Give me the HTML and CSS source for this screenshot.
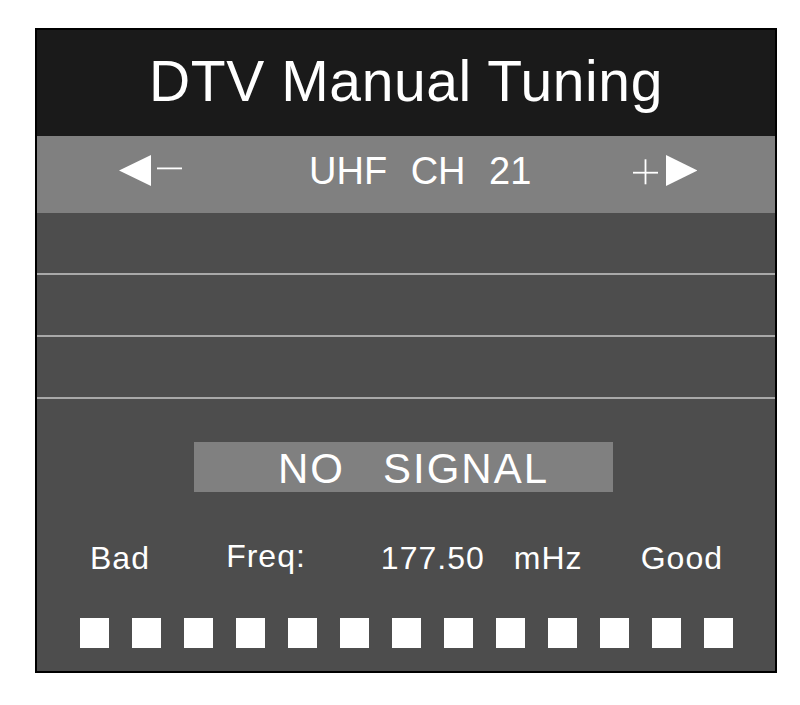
FILE: index.html
```html
<!DOCTYPE html>
<html lang="en">
<head>
  <meta charset="UTF-8">
  <meta name="viewport" content="width=device-width, initial-scale=1.0">
  <title>DTV Manual Tuning</title>
  <link rel="stylesheet" href="styles.css">
</head>
<body>
  <div class="screen">
    <div class="title">DTV Manual Tuning</div>

    <div class="channel-bar">
      <svg class="arrow" width="64" height="32" viewBox="0 0 64 32">
        <polygon points="0,15.5 32,0 32,31" fill="#fff"/>
        <rect x="38" y="12.5" width="25" height="1.8" fill="#fff"/>
      </svg>
      <span class="channel">UHF CH 21</span>
      <svg class="arrow arrow-right" width="64" height="32" viewBox="0 0 64 32">
        <rect x="0" y="16.8" width="25" height="1.8" fill="#fff"/>
        <rect x="11.6" y="4.3" width="1.8" height="25" fill="#fff"/>
        <polygon points="33,0 64.5,15.5 33,31" fill="#fff"/>
      </svg>
    </div>

    <div class="info-row"></div>
    <div class="info-row"></div>
    <div class="info-row"></div>

    <div class="status">
      <span>NO</span>
      <span>SIGNAL</span>
    </div>

    <div class="signal-row">
      <span>Bad</span>
      <div class="freq-group">
        <span class="freq-label">Freq:</span>
        <span class="freq-value">177.50</span>
        <span>mHz</span>
      </div>
      <span>Good</span>
    </div>

    <div class="meter">
      <span class="cell"></span>
      <span class="cell"></span>
      <span class="cell"></span>
      <span class="cell"></span>
      <span class="cell"></span>
      <span class="cell"></span>
      <span class="cell"></span>
      <span class="cell"></span>
      <span class="cell"></span>
      <span class="cell"></span>
      <span class="cell"></span>
      <span class="cell"></span>
      <span class="cell"></span>
    </div>
  </div>
</body>
</html>
```

FILE: styles.css
```css
body {
  margin: 0;
  background-color: #fff;
  font-family: "Liberation Sans", Arial, sans-serif;
}
.screen {
  box-sizing: border-box;
  width: 742px;
  margin: 28px 0 0 35px;
  border: 2px solid #000;
  background-color: #4d4d4d;
  color: #fff;
  padding-bottom: 23px;
}
.title {
  height: 106px;
  box-sizing: border-box;
  padding-bottom: 4px;
  background-color: #1a1a1a;
  font-size: 57px;
  line-height: 102px;
  letter-spacing: 0.6px;
  text-align: center;
}
.channel-bar {
  display: flex;
  align-items: center;
  height: 77px;
  box-sizing: border-box;
  padding: 0 0 7px 82px;
  background-color: #808080;
}
.arrow {
  display: block;
  flex-shrink: 0;
}
.channel {
  margin-left: 126px;
  font-size: 38px;
  line-height: 70px;
  word-spacing: 13px;
}
.arrow-right {
  margin-left: auto;
  margin-right: 78px;
}
.info-row {
  height: 60px;
  border-bottom: 2px solid #a9a9a9;
}
.status {
  display: flex;
  gap: 38px;
  box-sizing: border-box;
  width: 419px;
  height: 50px;
  margin: 43px 0 0 157px;
  padding: 4px 0 0 84px;
  background-color: #808080;
  font-size: 42px;
  line-height: 46px;
  letter-spacing: 2px;
}
.signal-row {
  display: flex;
  justify-content: space-between;
  align-items: flex-start;
  margin-top: 50px;
  padding: 0 52px 0 53px;
  font-size: 32px;
  line-height: 32px;
  letter-spacing: 1px;
}
.freq-group {
  display: flex;
  align-items: flex-start;
  margin-left: 18px;
}
.freq-label {
  margin-top: -2px;
  margin-right: 75px;
}
.freq-value {
  margin-right: 29px;
}
.meter {
  display: flex;
  justify-content: center;
  gap: 23px;
  margin-top: 44px;
}
.cell {
  width: 29px;
  height: 30px;
  background-color: #fff;
}
```
